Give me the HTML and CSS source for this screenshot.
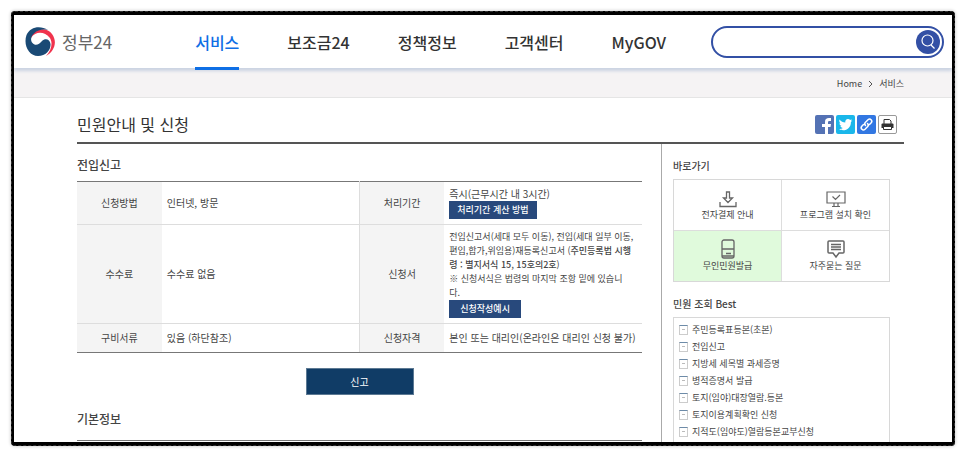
FILE: index.html
```html
<!DOCTYPE html>
<html lang="ko">
<head>
    <meta charset="UTF-8">
    <meta name="viewport" content="width=device-width, initial-scale=1.0">
    <title>정부24 - 민원안내 및 신청</title>
    <link rel="stylesheet" href="styles.css">
</head>
<body>
    <div class="frame">
        <div class="page">
            <header class="header">
                <a class="logo" href="#">
                    <svg viewBox="0 0 30 30" width="30" height="30" aria-hidden="true">
                        <path fill="#f0334d" d="M6 9C11 0 23 1 27 7c6 8 2 18-6 22 6-6 7-14 3.500-18.500C20 5 11 3.500 6 11z"/>
                        <path fill="#1a4a75" d="M23 3C15-2 5 0 1.500 8-2 18 4 29 13 29c8 0 13-6 12.500-12-.5-5-5.500-6-8.500-3-3 4-7 5-9.500 2C5 13 6 9 9 6.500 13 2.500 18 2 23 3z"/>
                    </svg>
                    <span>정부24</span>
                </a>
                <nav class="nav">
                    <a class="active" href="#">서비스</a>
                    <a href="#">보조금24</a>
                    <a href="#">정책정보</a>
                    <a href="#">고객센터</a>
                    <a href="#">MyGOV</a>
                </nav>
                <form class="search">
                    <input type="search" aria-label="검색어">
                    <button type="button" aria-label="검색">
                        <svg viewBox="0 0 24 24" width="24" height="24" fill="none" stroke="#fff" stroke-width="1.2">
                            <circle cx="11.5" cy="10.5" r="5.5"/>
                            <path d="M15 15l3.500 3.500"/>
                        </svg>
                    </button>
                </form>
            </header>

            <div class="breadcrumb">
                <a href="#">Home</a>
                <svg viewBox="0 0 5 8" width="5" height="8" fill="none" stroke="#555" aria-hidden="true"><path d="M1 1l3 3-3 3"/></svg>
                <a href="#">서비스</a>
            </div>

            <div class="container">
                <div class="page-title">
                    <h1>민원안내 및 신청</h1>
                    <div class="share">
                        <a class="facebook" href="#" aria-label="페이스북">
                            <svg viewBox="0 0 19 19" width="19" height="19"><path fill="#fff" d="M10 19v-7H7V9h3V7c0-3 1.500-4 4-4h2v3h-1.500C13.300 6 13 6.500 13 7.500V9h3l-.5 3H13v7z"/></svg>
                        </a>
                        <a class="twitter" href="#" aria-label="트위터">
                            <svg viewBox="0 0 19 19" width="19" height="19"><path fill="#fff" d="M3.500 4.500C5 6.500 7 7.500 9.300 7.600 8.900 5.500 10.300 4 12 4c.9 0 1.600.4 2.100.9l1.700-.7-1 1.600 1.500-.4-1.400 1.500c.2 5-3.500 8.400-7.700 8.400-1.700 0-3-.4-4.200-1.200 1.500.1 2.900-.3 3.900-1.100-1.300-.1-2.200-.9-2.500-2l1.200-.1C4.200 10.500 3.500 9.500 3.500 8.200l1.200.3C3.400 7.500 3 6 3.500 4.500z"/></svg>
                        </a>
                        <a class="link" href="#" aria-label="주소 복사">
                            <svg viewBox="0 0 19 19" width="19" height="19" fill="none" stroke="#fff" stroke-width="1.5" stroke-linecap="round"><path d="M8.500 10.500c-1-1-.9-2.400 0-3.300L11 4.800c2.200-2 5 .8 3.200 3L12.500 9.500M10.500 8.500c1 1 .9 2.400 0 3.300L8 14.200c-2.200 2-5-.8-3.200-3L6.500 9.500"/></svg>
                        </a>
                        <a class="print" href="#" aria-label="인쇄">
                            <svg viewBox="0 0 17 17" width="17" height="17"><path fill="#fff" stroke="#333" d="M5 8V3.500h5.500l1.500 1.500V8"/><path fill="#333" d="M3.500 7.500h10q1 0 1 1V12h-12V8.500q0-1 1-1z"/><path fill="#fff" stroke="#333" d="M4.500 10.500h8v3h-8z"/></svg>
                        </a>
                    </div>
                </div>

                <div class="columns">
                    <main class="main">
                        <h2>전입신고</h2>
                        <table class="info">
                            <colgroup>
                                <col class="col-label"><col class="col-value"><col class="col-label"><col class="col-value">
                            </colgroup>
                            <tr>
                                <th scope="row">신청방법</th>
                                <td>인터넷, 방문</td>
                                <th scope="row">처리기간</th>
                                <td>즉시(근무시간 내 3시간)<br><button class="btn-small" type="button">처리기간 계산 방법</button></td>
                            </tr>
                            <tr>
                                <th scope="row">수수료</th>
                                <td>수수료 없음</td>
                                <th scope="row">신청서</th>
                                <td class="forms">전입신고서(세대 모두 이동), 전입(세대 일부 이동,<br>편입,합가,위임용)재등록신고서 (<b>주민등록법 시행<br>령 : 별지서식 15, 15호의2호</b>)<br>※ 신청서식은 법령의 마지막 조항 밑에 있습니<br>다.<br><button class="btn-small" type="button">신청작성예시</button></td>
                            </tr>
                            <tr>
                                <th scope="row">구비서류</th>
                                <td>있음 (하단참조)</td>
                                <th scope="row">신청자격</th>
                                <td>본인 또는 대리인(온라인은 대리인 신청 불가)</td>
                            </tr>
                        </table>
                        <button class="btn-apply" type="button">신고</button>
                        <h2 class="basic">기본정보</h2>
                    </main>

                    <aside class="side">
                        <h3>바로가기</h3>
                        <div class="shortcuts">
                            <a href="#">
                                <svg viewBox="0 0 20 18" width="20" height="18" fill="none" stroke="#666" stroke-width="1.3"><path d="M2 12v4.500h16V12M8.500 2h3v6h3L10 12.500 5.500 8h3z"/></svg>
                                전자결제 안내
                            </a>
                            <a href="#">
                                <svg viewBox="0 0 20 18" width="20" height="18" fill="none" stroke="#666" stroke-width="1.2"><path d="M1 2h18v11H1zM8 13v3M12 13v3M6 16.500h8M6.500 6.500l3 3 4.500-4.500"/></svg>
                                프로그램 설치 확인
                            </a>
                            <a class="on" href="#">
                                <svg viewBox="0 0 20 20" width="20" height="20" fill="none" stroke="#666" stroke-width="1.3"><rect x="4" y="1" width="12" height="18" rx="2"/><path d="M4 10h12M8 14.500h5M4 17h12"/></svg>
                                무인민원발급
                            </a>
                            <a href="#">
                                <svg viewBox="0 0 20 20" width="20" height="20" fill="none" stroke="#666" stroke-width="1.5"><path d="M3 2h14q1 0 1 1v10q0 1-1 1h-4l-3 4-3-4H3q-1 0-1-1V3q0-1 1-1zM5 5.500h10M5 8h10M5 10.500h10"/></svg>
                                자주묻는 질문
                            </a>
                        </div>
                        <h3>민원 조회 Best</h3>
                        <ul class="best">
                            <li><a href="#">주민등록표등본(초본)</a></li>
                            <li><a href="#">전입신고</a></li>
                            <li><a href="#">지방세 세목별 과세증명</a></li>
                            <li><a href="#">병적증명서 발급</a></li>
                            <li><a href="#">토지(임야)대장열람.등본</a></li>
                            <li><a href="#">토지이용계획확인 신청</a></li>
                            <li><a href="#">지적도(임야도)열람등본교부신청</a></li>
                        </ul>
                    </aside>
                </div>
            </div>
        </div>
    </div>
</body>
</html>
```
FILE: styles.css
```css
* {
    box-sizing: border-box;
}

body {
    margin: 0;
    padding: 11px;
    height: 100vh;
    background-color: #fff;
    color: #444;
    font-family: "Noto Sans CJK KR", "Noto Sans", sans-serif;
    font-size: 10px;
    line-height: 14px;
}

a {
    color: inherit;
    text-decoration: none;
}

button {
    font-family: inherit;
    cursor: pointer;
}

h1, h2, h3 {
    margin: 0;
    font-weight: 500;
}

/* hand-drawn black frame */
.frame {
    position: relative;
    height: 100%;
    border: solid #000;
    border-width: 4px 3px;
    border-radius: 4px;
    box-shadow: 0 0 3px 1px rgba(0, 0, 0, 0.15);
}

.frame::after {
    content: "";
    position: absolute;
    inset: -4px -3px;
    border: 1px dashed #333;
    border-radius: 4px;
    pointer-events: none;
}

.page {
    height: 100%;
    overflow: hidden;
}

.header {
    position: relative;
    display: flex;
    height: 53px;
    padding: 0 8px 0 11px;
    align-items: center;
    background-color: #fff;
    box-shadow: 0 3px 3px #cbd3e2;
}

.logo {
    display: flex;
    flex-shrink: 0;
    align-items: center;
    gap: 7px;
    color: #666;
    font-size: 17px;
    line-height: 24px;
    white-space: nowrap;
}

.nav {
    display: flex;
    align-self: stretch;
    flex-shrink: 0;
    gap: 48px;
    margin: 0 45px 0 83px;
    color: #333;
    font-size: 16px;
    font-weight: 500;
    line-height: 55px;
    white-space: nowrap;
}

.nav .active {
    height: 55px;
    color: #0f6fe5;
    border-bottom: 3px solid #0f6fe5;
}

.search {
    display: flex;
    flex: 1;
    min-width: 0;
    height: 32px;
    padding: 2px;
    align-items: center;
    border: 2px solid #3350a5;
    border-radius: 16px;
}

.search input {
    flex: 1;
    min-width: 0;
    border: 0;
    outline: 0;
    padding: 0 12px;
    background: none;
}

.search button {
    width: 24px;
    height: 24px;
    padding: 0;
    border: 0;
    border-radius: 50%;
    background-color: #3350a5;
}

.breadcrumb {
    display: flex;
    height: 30px;
    padding: 2px 48px 0 0;
    align-items: center;
    justify-content: flex-end;
    gap: 6px;
    background-color: #f5f3f4;
    border-bottom: 1px solid #e5e5e5;
    font-size: 9px;
}

.container {
    padding: 0 48px 0 63px;
}

.page-title {
    display: flex;
    height: 46px;
    padding-top: 8px;
    align-items: center;
    justify-content: space-between;
    border-bottom: 2px solid #555;
}

.page-title h1 {
    color: #333;
    font-size: 16px;
    font-weight: 400;
    line-height: 24px;
}

.share {
    display: flex;
    gap: 2px;
    padding-right: 7px;
}

.share a {
    width: 19px;
    height: 19px;
    border-radius: 2px;
    overflow: hidden;
}

.share svg {
    display: block;
}

.facebook {
    background-color: #5472b4;
}

.twitter {
    background-color: #1ab7ea;
}

.link {
    background-color: #3277e2;
}

.print {
    border: 1px solid #999;
}

.columns {
    display: flex;
    gap: 19px;
}

.main {
    flex: 1;
    min-width: 0;
    padding-top: 11px;
}

.main h2 {
    height: 26px;
    font-size: 12px;
    line-height: 20px;
}

.info {
    width: 100%;
    table-layout: fixed;
    border-collapse: collapse;
    border-top: 1px solid #777;
    border-bottom: 1px solid #777;
}

.col-label {
    width: 15%;
}

.col-value {
    width: 35%;
}

.info th,
.info td {
    padding: 5px 0 5px 5px;
    border-bottom: 1px solid #ddd;
    text-align: left;
}

.info th {
    padding: 6px 0;
    background-color: #f4f4f4;
    font-weight: 400;
    text-align: center;
}

.info tr:last-child th {
    padding: 7px 0;
}

.info tr:last-child th,
.info tr:last-child td {
    border-bottom-color: #777;
}

.info td + th {
    border-left: 1px solid #ddd;
}

.info .forms {
    font-size: 9px;
    white-space: nowrap;
}

.info b {
    font-weight: 500;
}

.btn-small {
    display: inline-block;
    height: 18px;
    padding: 0 8px;
    border: 0;
    background-color: #28497c;
    color: #fff;
    font-size: 9px;
    font-weight: 500;
    line-height: 18px;
    vertical-align: top;
}

.forms .btn-small {
    padding: 0 11px;
}

.btn-apply {
    display: block;
    width: 108px;
    height: 27px;
    margin: 15px auto 14px;
    border: 1px solid #5c7993;
    background-color: #103c66;
    color: #fff;
    font-size: 10px;
}

.main .basic {
    height: 32px;
    border-bottom: 1px solid #777;
}

.side {
    width: 243px;
    padding: 15px 14px 0 11px;
    border-left: 1px solid #aaa;
}

.side h3 {
    margin-bottom: 6px;
    font-size: 10px;
    line-height: 14px;
}

.shortcuts {
    display: grid;
    grid-template-columns: 1fr 1fr;
    gap: 1px;
    margin-bottom: 15px;
    border: 1px solid #d8d8d8;
    background-color: #ddd;
}

.shortcuts a {
    display: flex;
    height: 50px;
    padding-bottom: 8px;
    flex-direction: column;
    align-items: center;
    justify-content: flex-end;
    background-color: #fff;
    font-size: 9px;
}

.shortcuts .on {
    background-color: #e0fadc;
}

.best {
    margin: 0;
    padding: 3px 5px;
    list-style: none;
    border: 1px solid #d8d8d8;
    font-size: 9px;
    line-height: 17px;
}

.best li {
    display: flex;
    align-items: center;
    gap: 4px;
}

.best li::before {
    content: "";
    width: 7px;
    height: 8px;
    border: 1px solid #ccc;
    border-top-color: #6d8ba8;
    background: linear-gradient(#bbb, #bbb) center / 3px 1px no-repeat;
}
```
